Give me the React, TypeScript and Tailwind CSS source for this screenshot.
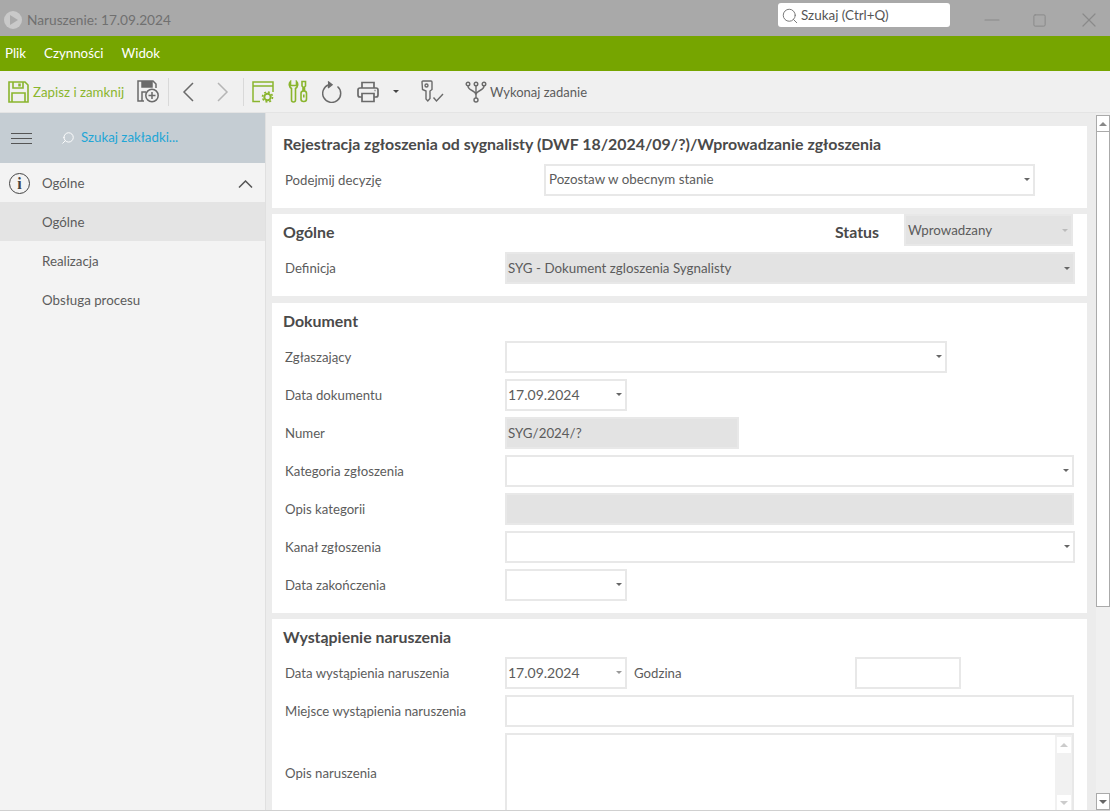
import { Minus, Square, X, Search } from "lucide-react";

const Caret = ({ className = "border-t-[#666]" }: { className?: string }) => (
  <span className={`w-0 h-0 border-x-[3px] border-x-transparent border-t-[3px] ${className}`} />
);

const SaveIcon = () => (
  <svg width="21" height="22" viewBox="0 0 21 22" fill="none" stroke="#8ab52e" strokeWidth="1.6">
    <path d="M1 1h16l3 3v17H1z" />
    <path d="M5 1v6h10V1" />
    <path d="M4 21v-9h13v9" />
    <path d="M11.5 2.5v3" strokeWidth="2.5" />
  </svg>
);

const SavePlusIcon = () => (
  <svg width="23" height="23" viewBox="0 0 23 23" fill="none" stroke="#6a6a6a" strokeWidth="1.5">
    <path d="M7 21H1V1h15l3 3v4" />
    <path d="M5 1v6h10V1" fill="#6a6a6a" />
    <path d="M5 21v-9h4" />
    <circle cx="15" cy="15.5" r="6.2" fill="#f0f0f0" />
    <path d="M15 12v7M11.5 15.5h7" />
  </svg>
);

const ChevronIcon = ({ dir, color }: { dir: "left" | "right"; color: string }) => (
  <svg width="12" height="20" viewBox="0 0 12 20" fill="none" stroke={color} strokeWidth="1.5">
    <path d={dir === "left" ? "M11 1L2 10l9 9" : "M1 1l9 9-9 9"} />
  </svg>
);

const WindowGearIcon = () => (
  <svg width="23" height="22" viewBox="0 0 23 22" fill="none" stroke="#8ab52e" strokeWidth="1.5">
    <path d="M8 20.5H1V1h20v10" />
    <path d="M1 5h20" />
    <circle cx="15.5" cy="16" r="3.2" strokeWidth="2" />
    <circle cx="15.5" cy="16" r="5" strokeDasharray="2 1.9" strokeWidth="1.6" />
  </svg>
);

const ToolsIcon = () => (
  <svg width="20" height="23" viewBox="0 0 20 23" fill="none" stroke="#8ab52e" strokeWidth="1.6">
    <path d="M2.5 1.5C.5 3.5 1 7 3.5 8.5V20a2 2 0 0 0 4 0V8.5C10 7 10.5 3.5 8.5 1.5V5.5h-6z" />
    <path d="M14 1.5h3.5V6l-1 1v3.5H15V7l-1-1z" />
    <rect x="13" y="11" width="5.5" height="10.5" rx="2.5" />
    <path d="M15.8 14.5v3" />
  </svg>
);

const RefreshIcon = () => (
  <svg width="20" height="23" viewBox="0 0 20 23" fill="none" stroke="#6a6a6a" strokeWidth="1.5">
    <path d="M15.5 6.5A9 9 0 1 1 7 4.8" />
    <path d="M6 1.5l4 3.3-4 3.2" fill="#6a6a6a" />
  </svg>
);

const PrinterIcon = () => (
  <svg width="22" height="22" viewBox="0 0 22 22" fill="none" stroke="#6a6a6a" strokeWidth="1.7">
    <path d="M5 7V1.5h12V7" />
    <path d="M5 16H3a2 2 0 0 1-2-2V9a2 2 0 0 1 2-2h16a2 2 0 0 1 2 2v5a2 2 0 0 1-2 2h-2" />
    <path d="M5 12.5h12v8H5z" />
    <path d="M17.5 9.5h1" />
  </svg>
);

const KeyCheckIcon = () => (
  <svg width="23" height="23" viewBox="0 0 23 23" fill="none" stroke="#6a6a6a" strokeWidth="1.4">
    <path d="M1 2a1 1 0 0 1 1-1h8a1 1 0 0 1 1 1v7.5L9 11v7.5L6.8 21 5 19v-8L1.5 9.5z" />
    <circle cx="5.5" cy="5.5" r="1.5" />
    <path d="M12.5 17.5l3 3.5 6.5-7" />
  </svg>
);

const ForkIcon = () => (
  <svg width="22" height="22" viewBox="0 0 22 22" fill="none" stroke="#6a6a6a" strokeWidth="1.4">
    <circle cx="3" cy="3" r="1.8" />
    <circle cx="11" cy="3" r="1.8" />
    <circle cx="19" cy="3" r="1.8" />
    <circle cx="11" cy="19" r="2" />
    <path d="M3 5c0 5 8 4 8 9v3M11 5v9M19 5c0 5-8 4-8 9" />
  </svg>
);

const Label = ({ children }: { children: string }) => (
  <span className="w-[233px] shrink-0 pl-[13px] pt-[2px] text-[13.2px] text-[#5c5c5c]">{children}</span>
);

const Field = ({
  width,
  value,
  caret,
  gray,
  date,
  pad = "pl-px",
  caretClass,
}: {
  width: string;
  value?: string;
  caret?: boolean;
  gray?: boolean;
  date?: boolean;
  pad?: string;
  caretClass?: string;
}) => (
  <div
    className={`${width} ${pad} h-8 flex items-center justify-between pr-[3px] border-2 border-[#e8e8e8] text-[#5c5c5c] ${
      date ? "text-[14px] pb-[2px]" : "text-[13.35px]"
    } ${gray ? "bg-[#e3e3e3]" : "bg-white pb-[2px]"}`}
  >
    <span>{value}</span>
    {caret && <Caret className={caretClass} />}
  </div>
);

const Row = ({ children }: { children: React.ReactNode }) => (
  <div className="flex items-center h-8 mb-1.5">{children}</div>
);

const Heading = ({ children }: { children: string }) => (
  <h2 className="pl-[11px] text-[15.9px] leading-5 font-bold text-[#4a4a4a]">{children}</h2>
);

export default function App() {
  return (
    <div className="w-[1110px] h-[811px] overflow-hidden flex flex-col bg-[#ececec] font-['Lato',sans-serif] border-b border-[#d0d0d0]">
      {/* title bar */}
      <div className="h-9 shrink-0 bg-[#a9a9a9] flex items-center pl-1 relative">
        <span className="w-[18px] h-[18px] rounded-full bg-[#c9c9c9] flex items-center justify-center mt-1">
          <span className="ml-0.5 w-0 h-0 border-y-[5px] border-y-transparent border-l-[8px] border-l-[#a9a9a9]" />
        </span>
        <span className="ml-[5px] mt-1 w-[751px] shrink-0 text-[13.7px] text-[#707070]">Naruszenie: 17.09.2024</span>
        <div className="mb-[6px] w-[172px] h-6 bg-white rounded-[3px] flex items-center pl-[3px] pt-px text-[13.45px] text-[#555]">
          <Search size={18} strokeWidth={1.3} className="text-[#777] mr-[2px]" />
          Szukaj (Ctrl+Q)
        </div>
        <div className="ml-auto flex items-center mt-1 text-[#8a8a8a]">
          <Minus size={24} strokeWidth={1.2} className="mr-[28px]" />
          <Square size={15} strokeWidth={1.6} className="mr-[30px]" />
          <X size={24} strokeWidth={1.2} className="mr-[9px]" />
        </div>
      </div>

      {/* menu */}
      <div className="h-[35px] shrink-0 bg-[#76a500] flex items-center gap-[18px] pl-[5px] text-[13.3px] text-white">
        <span>Plik</span>
        <span>Czynności</span>
        <span>Widok</span>
      </div>

      {/* toolbar */}
      <div className="h-[42px] shrink-0 bg-[#f0f0f0] flex items-center pl-2 border-b border-[#e4e4e4] text-[13.3px]">
        <SaveIcon />
        <span className="ml-1 pt-[2px] w-[90px] text-[#8ab52e] whitespace-nowrap">Zapisz i zamknij</span>
        <span className="ml-[14px]"><SavePlusIcon /></span>
        <span className="ml-2 w-px h-7 bg-[#d9d9d9]" />
        <span className="ml-[13px]"><ChevronIcon dir="left" color="#6a6a6a" /></span>
        <span className="ml-[23px]"><ChevronIcon dir="right" color="#b5b5b5" /></span>
        <span className="ml-[14px] w-px h-7 bg-[#d9d9d9]" />
        <span className="ml-2"><WindowGearIcon /></span>
        <span className="ml-[13px]"><ToolsIcon /></span>
        <span className="ml-[14px]"><RefreshIcon /></span>
        <span className="ml-[15px]"><PrinterIcon /></span>
        <span className="ml-[14px] flex"><Caret className="border-t-[#444]" /></span>
        <span className="ml-[22px]"><KeyCheckIcon /></span>
        <span className="ml-[21px]"><ForkIcon /></span>
        <span className="ml-[3px] pt-[2px] text-[13px] text-[#5c5c5c]">Wykonaj zadanie</span>
      </div>

      <div className="flex-1 flex min-h-0">
        {/* sidebar */}
        <aside className="w-[266px] shrink-0 bg-[#f3f3f3] border-r border-[#e0e0e0] text-[13.3px] text-[#5c5c5c]">
          <div className="h-[50px] bg-[#c5cdd3] flex items-center pl-[11px]">
            <div className="w-[21px] flex flex-col gap-[4px]">
              <span className="h-px bg-[#555]" />
              <span className="h-px bg-[#555]" />
              <span className="h-px bg-[#555]" />
            </div>
            <Search size={14} strokeWidth={1.6} className="ml-[29px] text-white -scale-x-100" />
            <span className="ml-[6px] text-[#1fa6d6]">Szukaj zakładki...</span>
          </div>
          <div className="h-[39px] flex items-center pl-[9px] pr-3 pt-[2px]">
            <span className="w-[21px] h-[21px] rounded-full border-[1.5px] border-[#444] flex items-center justify-center font-['Liberation_Serif',serif] font-bold text-[16px] text-[#444]">
              i
            </span>
            <span className="ml-3">Ogólne</span>
            <svg width="15" height="8" viewBox="0 0 15 8" fill="none" stroke="#555" strokeWidth="1.5" className="ml-auto">
              <path d="M1 7.5L7.5 1 14 7.5" />
            </svg>
          </div>
          <div className="h-[39px] flex items-center pl-[42px] pt-[2px] bg-[#e4e4e4]">Ogólne</div>
          <div className="h-[39px] flex items-center pl-[42px] pt-[2px]">Realizacja</div>
          <div className="h-[39px] flex items-center pl-[42px] pt-[2px]">Obsługa procesu</div>
        </aside>

        {/* content */}
        <main className="flex-1 min-w-0 pt-[13px] pl-[6px] flex flex-col gap-1.5 overflow-hidden">
          <section className="w-[815px] h-[82px] shrink-0 bg-white pt-2">
            <Heading>Rejestracja zgłoszenia od sygnalisty (DWF 18/2024/09/?)/Wprowadzanie zgłoszenia</Heading>
            <div className="flex items-center mt-[10px]">
              <span className="w-[272px] shrink-0 pl-[13px] pt-[2px] text-[13.2px] text-[#5c5c5c]">Podejmij decyzję</span>
              <Field width="w-[491px]" value="Pozostaw w obecnym stanie" caret pad="pl-[3px]" />
            </div>
          </section>

          <section className="w-[815px] h-[82px] shrink-0 bg-white">
            <div className="flex items-center h-8 mb-1.5">
              <div className="pt-[3px]">
                <Heading>Ogólne</Heading>
              </div>
              <span className="ml-auto mr-[25px] pt-[3px] text-[15.9px] font-bold text-[#4a4a4a]">Status</span>
              <div className="mr-[14px]">
                <Field width="w-[169px]" value="Wprowadzany" caret gray pad="pl-[2px]" caretClass="border-t-[#bbb]" />
              </div>
            </div>
            <div className="flex items-center h-8">
              <Label>Definicja</Label>
              <div className="flex-1 mr-[12px]">
                <Field width="w-full" value="SYG - Dokument zgloszenia Sygnalisty" caret gray />
              </div>
            </div>
          </section>

          <section className="w-[815px] h-[310px] shrink-0 mt-px bg-white pt-2">
            <Heading>Dokument</Heading>
            <div className="mt-[10px]">
              <Row>
                <Label>Zgłaszający</Label>
                <Field width="w-[442px]" caret />
              </Row>
              <Row>
                <Label>Data dokumentu</Label>
                <Field width="w-[122px]" value="17.09.2024" date caret />
              </Row>
              <Row>
                <Label>Numer</Label>
                <Field width="w-[234px]" value="SYG/2024/?" gray />
              </Row>
              <Row>
                <Label>Kategoria zgłoszenia</Label>
                <Field width="w-[569px]" caret />
              </Row>
              <Row>
                <Label>Opis kategorii</Label>
                <Field width="w-[569px]" gray />
              </Row>
              <Row>
                <Label>Kanał zgłoszenia</Label>
                <Field width="w-[570px]" caret />
              </Row>
              <Row>
                <Label>Data zakończenia</Label>
                <Field width="w-[122px]" caret />
              </Row>
            </div>
          </section>

          <section className="w-[815px] flex-1 min-h-0 bg-white pt-2 overflow-hidden">
            <Heading>Wystąpienie naruszenia</Heading>
            <div className="mt-[10px]">
              <Row>
                <Label>Data wystąpienia naruszenia</Label>
                <Field width="w-[122px]" value="17.09.2024" date caret caretClass="border-t-[#999]" />
                <span className="ml-[7px] pt-[2px] w-[221px] text-[13.2px] text-[#5c5c5c]">Godzina</span>
                <Field width="w-[106px]" />
              </Row>
              <Row>
                <Label>Miejsce wystąpienia naruszenia</Label>
                <Field width="w-[569px]" />
              </Row>
              <div className="flex items-center">
                <Label>Opis naruszenia</Label>
                <div className="w-[569px] h-[80px] border-2 border-[#e8e8e8] flex justify-end">
                  <div className="w-[17px] h-full bg-[#f1f1f1] flex flex-col justify-between items-center pt-0.5">
                    <span className="w-[14px] h-4 bg-white flex items-center justify-center">
                      <span className="w-0 h-0 border-x-[4px] border-x-transparent border-b-[4px] border-b-[#ccc]" />
                    </span>
                    <span className="w-[14px] h-4 bg-white flex items-center justify-center">
                      <span className="w-0 h-0 border-x-[4px] border-x-transparent border-t-[4px] border-t-[#ccc]" />
                    </span>
                  </div>
                </div>
              </div>
            </div>
          </section>
        </main>

        {/* scrollbar */}
        <div className="w-[14px] shrink-0 pt-[2px] flex flex-col items-stretch bg-[#f0f0f0]">
          <span className="h-[17px] bg-white border border-[#aaa] flex items-center justify-center">
            <span className="w-0 h-0 border-x-[4px] border-x-transparent border-b-[4px] border-b-[#888]" />
          </span>
          <span className="h-[475px] bg-white border-x border-b border-[#aaa]" />
          <span className="mt-auto h-[17px] bg-white border border-[#aaa] flex items-center justify-center">
            <span className="w-0 h-0 border-x-[4px] border-x-transparent border-t-[4px] border-t-[#666]" />
          </span>
        </div>
      </div>
    </div>
  );
}
